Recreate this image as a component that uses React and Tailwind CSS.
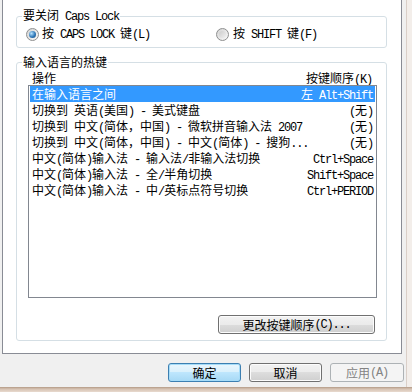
import React from "react";

const mono = "font-['Liberation_Mono',monospace] text-[12px] tracking-[-1.2px] whitespace-pre";

function T({ s }) {
  const parts = s.split(/([\x20-\x7e]+)/);
  return parts.map((p, i) =>
    p === "" ? null : i % 2 === 1 ? (
      <span key={i} className={mono}>{p}</span>
    ) : (
      <span key={i}>{p}</span>
    )
  );
}

function Radio({ checked }) {
  return (
    <span className="w-[13px] h-[13px] rounded-full border border-[#8e8f8f] bg-[linear-gradient(135deg,#d4d4d4,#f9f9f9)] flex items-center justify-center shrink-0">
      {checked ? (
        <span className="w-[7px] h-[7px] rounded-full bg-[radial-gradient(circle_at_35%_35%,#b8e4ff,#2f78b8_55%,#1b4c7c)]" />
      ) : (
        <span className="w-[7px] h-[7px] rounded-full bg-[linear-gradient(135deg,#cdcdcd,#f0f0f0)]" />
      )}
    </span>
  );
}

const rows = [
  ["在输入语言之间", "左 Alt+Shift"],
  ["切换到 英语(美国) - 美式键盘", "(无)"],
  ["切换到 中文(简体，中国) - 微软拼音输入法 2007", "(无)"],
  ["切换到 中文(简体，中国) - 中文(简体) - 搜狗...", "(无)"],
  ["中文(简体)输入法 - 输入法/非输入法切换", "Ctrl+Space"],
  ["中文(简体)输入法 - 全/半角切换", "Shift+Space"],
  ["中文(简体)输入法 - 中/英标点符号切换", "Ctrl+PERIOD"],
];

export default function App() {
  return (
    <div className="w-[412px] h-[392px] flex flex-col bg-[#f0f0f0] text-[12px] text-black font-['Noto_Sans_CJK_SC',sans-serif] overflow-hidden">
      <div className="flex h-[387px]">
        <div className="w-[406px] flex flex-col pl-[2px]">
          {/* tab page */}
          <div className="w-[400px] h-[354px] bg-white border-l border-r border-b border-[#898c95] pt-[7px] flex flex-col">
            <fieldset className="ml-[13px] mr-[14px] border border-[#d5dfe5] rounded-[3px]">
              <legend className="ml-[5px] px-[1px] leading-[16px]">
                <T s="要关闭 Caps Lock" />
              </legend>
              <div className="flex items-center h-[16px] mt-[1px] mb-[5px] pl-[9px] leading-[16px]">
                <label className="w-[190px] flex items-center gap-[3px]">
                  <Radio checked />
                  <span><T s="按 CAPS LOCK 键(L)" /></span>
                </label>
                <label className="flex items-center gap-[4px]">
                  <Radio />
                  <span><T s="按 SHIFT 键(F)" /></span>
                </label>
              </div>
            </fieldset>

            <fieldset className="mt-[6px] ml-[13px] mr-[14px] border border-[#d5dfe5] rounded-[3px] pb-[6px] flex flex-col">
              <legend className="ml-[5px] px-[1px] leading-[16px]">
                <T s="输入语言的热键" />
              </legend>
              <div className="flex justify-between h-[15px] leading-[15px] pl-[15px] pr-[14px]">
                <span>操作</span>
                <span><T s="按键顺序(K)" /></span>
              </div>
              <div className="ml-[11px] mr-[9px] h-[213px] border border-[#828790] bg-white px-[1px] flex flex-col">
                {rows.map(([a, b], i) => (
                  <div
                    key={i}
                    className={
                      "flex justify-between h-[16px] leading-[16px] px-[2px] whitespace-nowrap " +
                      (i === 0 ? "bg-[#3399ff] text-white" : "")
                    }
                  >
                    <span><T s={a} /></span>
                    <span><T s={b} /></span>
                  </div>
                ))}
              </div>
              <div className="flex justify-end mt-[17px] mr-[11px]">
                <button className="w-[157px] h-[19px] flex items-center justify-center rounded-[3px] border border-[#707070] bg-[linear-gradient(#f2f2f2_0%,#ebebeb_50%,#dddddd_50%,#cfcfcf_100%)] shadow-[inset_0_0_0_1px_#fcfcfc] leading-none">
                  <T s="更改按键顺序(C)..." />
                </button>
              </div>
            </fieldset>
          </div>

          {/* dialog buttons */}
          <div className="flex justify-end gap-[8px] pt-[9px] pr-[2px]">
            <button className="w-[73px] h-[19px] flex items-center justify-center rounded-[3px] border border-[#3c7fb1] bg-[linear-gradient(#eaf6fd_0%,#d9f0fc_50%,#bee6fd_50%,#a7d9f5_100%)] shadow-[inset_0_0_0_1px_#a6dcf8] leading-none">
              确定
            </button>
            <button className="w-[73px] h-[19px] flex items-center justify-center rounded-[3px] border border-[#707070] bg-[linear-gradient(#f2f2f2_0%,#ebebeb_50%,#dddddd_50%,#cfcfcf_100%)] shadow-[inset_0_0_0_1px_#fcfcfc] leading-none">
              取消
            </button>
            <button className="w-[74px] h-[19px] flex items-center justify-center rounded-[3px] border border-[#adb2b5] bg-[#f4f4f4] text-[#838383] leading-none">
              <T s="应用(A)" />
            </button>
          </div>
        </div>
        <div className="flex-1 border-l border-[#dacfc8] bg-[#f3eeea]" />
      </div>
      <div className="h-[5px] bg-[linear-gradient(#b39a86,#d6c2b2_40%,#e8dacf)]" />
    </div>
  );
}
